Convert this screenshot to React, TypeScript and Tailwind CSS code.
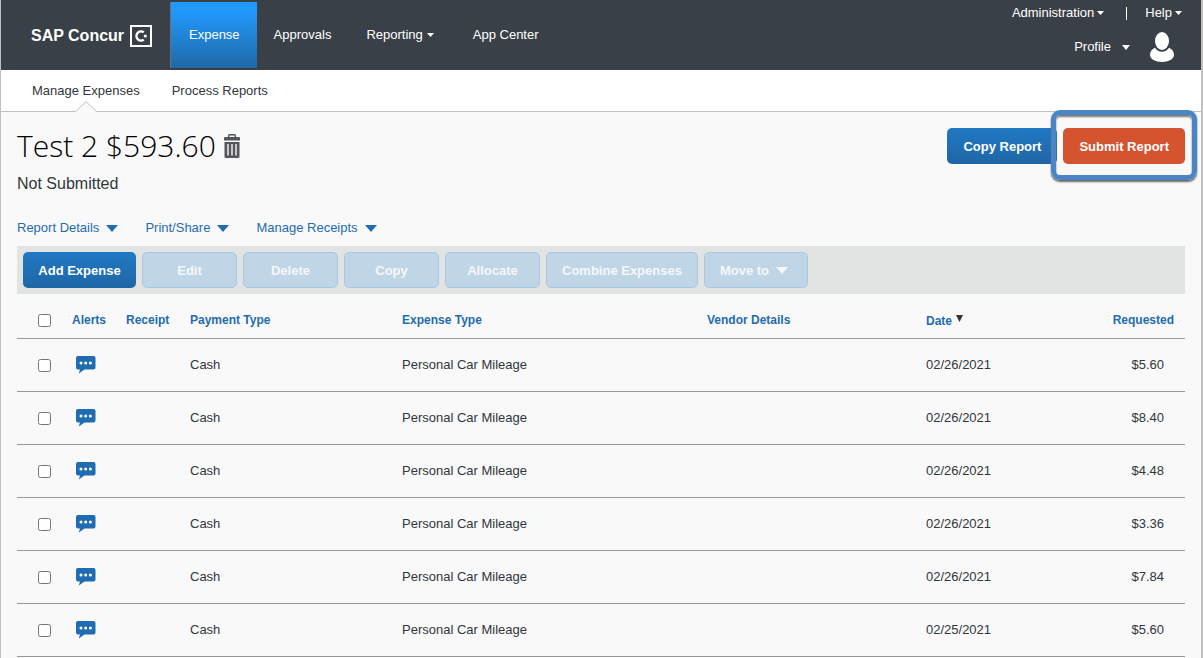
import { useState } from "react";

type Expense = {
  id: number;
  payment: string;
  type: string;
  vendor?: string;
  date: string;
  amount: string;
};

const expenses: Expense[] = [
  { id: 1, payment: "Cash", type: "Personal Car Mileage", date: "02/26/2021", amount: "$5.60" },
  { id: 2, payment: "Cash", type: "Personal Car Mileage", date: "02/26/2021", amount: "$8.40" },
  { id: 3, payment: "Cash", type: "Personal Car Mileage", date: "02/26/2021", amount: "$4.48" },
  { id: 4, payment: "Cash", type: "Personal Car Mileage", date: "02/26/2021", amount: "$3.36" },
  { id: 5, payment: "Cash", type: "Personal Car Mileage", date: "02/26/2021", amount: "$7.84" },
  { id: 6, payment: "Cash", type: "Personal Car Mileage", date: "02/25/2021", amount: "$5.60" },
];

const reportMenus = ["Report Details", "Print/Share", "Manage Receipts"];
const bulkActions = ["Edit", "Delete", "Copy", "Allocate", "Combine Expenses"];

function Caret({ className = "" }: { className?: string }) {
  return (
    <svg viewBox="0 0 12 7" preserveAspectRatio="none" className={className} fill="currentColor" aria-hidden="true">
      <path d="M0 0h12L6 7z" />
    </svg>
  );
}

function ConcurMark() {
  return (
    <svg viewBox="0 0 22 22" className="size-[22px]" fill="none" stroke="currentColor" aria-hidden="true">
      <rect x="1" y="1" width="20" height="20" strokeWidth="2" />
      <path d="M13.800 7.300A4.600 4.600 0 1 0 13.800 14.700" strokeWidth="2.400" />
      <circle cx="15.300" cy="11" r="1.600" fill="currentColor" stroke="none" />
    </svg>
  );
}

function Avatar() {
  return (
    <svg viewBox="0 0 24 30" className="h-[30px] w-6" fill="currentColor" aria-hidden="true">
      <ellipse cx="12" cy="9" rx="7" ry="9" />
      <path d="M5 15.8C2 17 0 19.6 0 22.8 0 27 5.4 30 12 30s12-3 12-7.200c0-3.200-2-5.800-5-7C17.300 18.400 14.800 19.800 12 19.800S6.700 18.400 5 15.800z" />
    </svg>
  );
}

function Trash() {
  return (
    <svg viewBox="0 0 16 24" className="h-6 w-4 text-[#55565a]" fill="currentColor" aria-hidden="true">
      <path d="M4 3V1.500Q4 0 5.500 0h5Q12 0 12 1.500V3h3q1 0 1 1v2.500H0V4q0-1 1-1zM5.500 3h5V1.500h-5z" fillRule="evenodd" />
      <path
        d="M.5 8h15v14.500q0 1.500-1.500 1.500H2Q.5 24 .5 22.500zM3.300 10v11.500h1.400V10zm4 0v11.500h1.400V10zm4 0v11.500h1.400V10z"
        fillRule="evenodd"
      />
    </svg>
  );
}

function Comment() {
  return (
    <svg viewBox="0 0 20 18" className="block h-[18px] w-5" aria-hidden="true">
      <path d="M2 0h15.500q2 0 2 2v9.500q0 2-2 2H8.500L2.800 17.600 4 13.500H2q-2 0-2-2V2Q0 0 2 0z" fill="#1f6cb0" />
      <g fill="#fff">
        <circle cx="5" cy="7" r="1.500" />
        <circle cx="9.700" cy="7" r="1.500" />
        <circle cx="14.400" cy="7" r="1.500" />
      </g>
    </svg>
  );
}

function Header() {
  return (
    <header className="flex h-[70px] justify-between bg-[#3a4047] text-white">
      <div className="flex">
        <a href="#home" className="flex w-[169px] items-center gap-[6px] pt-[2px] pl-[30px] text-base font-bold">
          SAP Concur
          <ConcurMark />
        </a>
        <nav className="flex py-[2px]">
          <a
            href="#expense"
            aria-current="page"
            className="flex items-center border-l border-[#6b7075] bg-linear-to-b from-[#2198fb] from-15% to-[#1f69a8] pr-[17px] pl-[18px]"
          >
            Expense
          </a>
          <a href="#approvals" className="flex items-center px-[17px]">Approvals</a>
          <button className="flex items-center gap-1 px-[18px]">
            Reporting
            <Caret className="h-1 w-[7px]" />
          </button>
          <a href="#apps" className="flex items-center px-[21px]">App Center</a>
        </nav>
      </div>

      <div className="flex flex-col items-end">
        <div className="flex h-[26px] items-center pr-[19px]">
          <button className="flex items-center gap-[3px]">
            Administration
            <Caret className="h-1 w-[7px]" />
          </button>
          <span className="ml-[22px] h-[13px] w-px bg-white" />
          <button className="ml-[18px] flex items-center gap-[3px]">
            Help
            <Caret className="h-1 w-[7px]" />
          </button>
        </div>
        <button className="flex h-[42px] items-center pr-[27px]">
          Profile
          <Caret className="ml-[11px] h-[5px] w-2" />
          <span className="ml-5">
            <Avatar />
          </span>
        </button>
      </div>
    </header>
  );
}

function SubNav() {
  return (
    <nav className="flex h-[42px] gap-8 border-b border-[#c0c0c0] bg-white pl-[31px] text-[#32363a]">
      <a href="#manage" aria-current="page" className="relative flex items-center">
        Manage Expenses
        {/* notch that opens the border under the current item */}
        <svg viewBox="0 0 22 11" className="absolute -bottom-px left-1/2 h-[11px] w-[22px] -translate-x-1/2" aria-hidden="true">
          <path d="M0 11L11 0l11 11z" fill="#f9f9f9" />
          <path d="M0 10.500h.5L11 .7l10.500 9.800h.5" fill="none" stroke="#c0c0c0" />
        </svg>
      </a>
      <a href="#process" className="flex items-center">Process Reports</a>
    </nav>
  );
}

export default function App() {
  const [selected, setSelected] = useState<number[]>([]);
  const allSelected = selected.length === expenses.length;

  const toggle = (id: number) => {
    setSelected((prev) => (prev.includes(id) ? prev.filter((x) => x !== id) : [...prev, id]));
  };

  return (
    <div className="h-screen overflow-hidden border-r-2 border-l border-r-[#c0c0c0] border-l-[#c0c0c0] bg-[#f9f9f9] font-['Liberation_Sans',Arial,sans-serif] text-[13px] leading-4 text-[#32363a]">
      <Header />
      <SubNav />

      <main className="px-4">
        <div className="flex items-start justify-between pt-4">
          <div>
            <div className="flex items-center gap-2">
              <h1 className="font-['Open_Sans',sans-serif] text-[30px] leading-9 font-light text-black">
                Test 2 $593.60
              </h1>
              <button aria-label="Delete report">
                <Trash />
              </button>
            </div>
            <p className="mt-[10px] text-base leading-5">Not Submitted</p>
          </div>
          <div className="flex gap-[6px] font-bold text-white">
            <button className="h-9 rounded-[5px] bg-linear-to-b from-[#2079c4] to-[#1f66a5] px-4 pt-px">Copy Report</button>
            <div className="relative">
              <button className="h-9 rounded-[5px] bg-[#d55430] px-4 pt-px">Submit Report</button>
              {/* call-out ring */}
              <div className="pointer-events-none absolute -inset-x-3 -top-[18px] -bottom-4 rounded-[9px] border-[5px] border-[#4a86c5] shadow-[0_2px_2px_#666,inset_0_2px_2px_#777]" />
            </div>
          </div>
        </div>

        <div className="mt-[26px] flex gap-[27px] text-[#1f6cb0]">
          {reportMenus.map((label) => (
            <button key={label} className="flex items-center gap-[7px]">
              {label}
              <Caret className="h-[7px] w-3" />
            </button>
          ))}
        </div>

        <div className="mt-[10px] flex gap-[6px] bg-[#e1e4e3] p-[6px] font-bold">
          <button className="h-9 min-w-[113px] rounded-[5px] bg-linear-to-b from-[#2079c4] to-[#1f66a5] px-[15px] pt-px text-white">
            Add Expense
          </button>
          {bulkActions.map((label) => (
            <button
              key={label}
              disabled={selected.length === 0}
              className="h-9 min-w-[95px] rounded-[5px] border border-[#a6c8e4] bg-[#c0d5e6] px-[15px] pt-px text-[#f5f8fb]"
            >
              {label}
            </button>
          ))}
          <button
            disabled={selected.length === 0}
            className="flex h-9 min-w-[104px] items-center gap-[7px] rounded-[5px] border border-[#a6c8e4] bg-[#c0d5e6] px-[15px] pt-px text-[#f5f8fb]"
          >
            Move to
            <Caret className="h-[7px] w-3" />
          </button>
        </div>

        <table className="w-full table-fixed text-left">
          <colgroup>
            <col className="w-[55px]" />
            <col className="w-[54px]" />
            <col className="w-[64px]" />
            <col className="w-[212px]" />
            <col className="w-[305px]" />
            <col className="w-[219px]" />
            <col />
            <col />
          </colgroup>
          <thead>
            <tr className="h-11 border-b border-[#999] text-xs text-[#1f6cb0]">
              <th className="pt-[10px] pl-[21px]">
                <input
                  type="checkbox"
                  aria-label="Select all expenses"
                  className="block size-[13px]"
                  checked={allSelected}
                  onChange={() => setSelected(allSelected ? [] : expenses.map((e) => e.id))}
                />
              </th>
              <th className="pt-2">Alerts</th>
              <th className="pt-2">Receipt</th>
              <th className="pt-2">Payment Type</th>
              <th className="pt-2">Expense Type</th>
              <th className="pt-2">Vendor Details</th>
              <th className="pt-[10px]" aria-sort="descending">
                <button className="flex items-center gap-1">
                  Date
                  <Caret className="mb-1 h-[7px] w-[7px] text-[#32363a]" />
                </button>
              </th>
              <th className="pt-2 pr-[11px] text-right">Requested</th>
            </tr>
          </thead>
          <tbody>
            {expenses.map((e) => (
              <tr key={e.id} className="h-[53px] border-b border-[#999]">
                <td className="pt-px pl-[21px]">
                  <input
                    type="checkbox"
                    aria-label={`Select expense ${e.id}`}
                    className="block size-[13px]"
                    checked={selected.includes(e.id)}
                    onChange={() => toggle(e.id)}
                  />
                </td>
                <td className="pt-px pl-1">
                  <Comment />
                </td>
                <td />
                <td>{e.payment}</td>
                <td>{e.type}</td>
                <td>{e.vendor}</td>
                <td>{e.date}</td>
                <td className="pr-[21px] text-right">{e.amount}</td>
              </tr>
            ))}
          </tbody>
        </table>
      </main>
    </div>
  );
}
